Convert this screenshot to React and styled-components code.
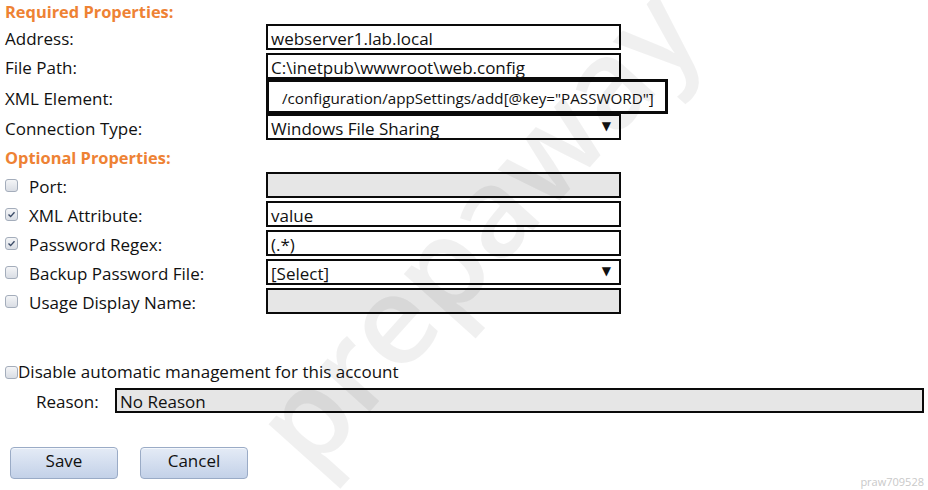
import React from "react";
import styled, { createGlobalStyle } from "styled-components";

const Global = createGlobalStyle`
  html, body {
    margin: 0;
    padding: 0;
    background: #fff;
  }
  body {
    font-family: "Open Sans", "Noto Sans", sans-serif;
    font-size: 17px;
    line-height: 20px;
    color: #111;
  }
`;

const Page = styled.div`
  position: relative;
  width: 928px;
  height: 490px;
  overflow: hidden;
  padding: 0 0 0 5px;
  box-sizing: border-box;
`;

const SectionTitle = styled.div`
  color: #ee8234;
  font-weight: 700;
  font-size: 16.4px;
  height: ${(p) => p.h || 24}px;
  line-height: ${(p) => p.lh || 24}px;
`;

const Rows = styled.div`
  display: flex;
  flex-direction: column;
  gap: 3px;
`;

const Row = styled.div`
  display: flex;
  align-items: center;
`;

const Label = styled.label`
  width: 261px;
  flex-shrink: 0;
  display: flex;
  align-items: center;
  gap: 11px;
  padding-top: 4px;
`;

const Field = styled.div`
  box-sizing: border-box;
  width: ${(p) => (p.wide ? 402 : 355)}px;
  height: ${(p) => (p.wide ? 35 : 26)}px;
  margin: ${(p) => (p.wide ? "-3px 0 -3px" : "0")};
  border: ${(p) => (p.wide ? 3 : 2)}px solid #0a0a0a;
  background: ${(p) => (p.disabled ? "#e6e6e6" : "#fff")};
  padding: ${(p) => (p.wide ? "3px 0 0 13px" : "3px 0 0 3px")};
  font-size: ${(p) => (p.wide ? 15.2 : 17)}px;
  display: flex;
  align-items: center;
  justify-content: space-between;
  white-space: nowrap;
  position: relative;
  z-index: ${(p) => (p.wide ? 1 : 0)};
`;

const Arrow = styled.span`
  font-family: "DejaVu Sans", sans-serif;
  font-size: 12px;
  margin-right: 8px;
  margin-top: -5px;
`;

const Box = styled.span`
  box-sizing: border-box;
  width: 13px;
  height: 13px;
  border: 1px solid #a4adbb;
  border-radius: 3px;
  background: linear-gradient(#f4f5f7, #d9dde4);
  display: inline-flex;
  align-items: center;
  justify-content: center;
  flex-shrink: 0;
  margin-top: -3px;
`;

const Check = ({ checked }) => (
  <Box>
    {checked && (
      <svg width="9" height="9" viewBox="0 0 9 9">
        <path d="M1.5 4.6 L3.6 6.6 L7.5 2.2" fill="none" stroke="#3a4a66" strokeWidth="1.4" />
      </svg>
    )}
  </Box>
);

const DisableLine = styled.div`
  display: flex;
  align-items: center;
  margin-top: 47px;
  height: 22px;
  ${Box} {
    margin-top: 0;
  }
`;

const ReasonRow = styled.div`
  display: flex;
  align-items: center;
  margin-top: 5px;
  padding-left: 31px;
`;

const ReasonLabel = styled.span`
  width: 79px;
  padding-top: 3px;
`;

const ReasonField = styled.div`
  box-sizing: border-box;
  width: 809px;
  height: 25px;
  border: 2px solid #0a0a0a;
  background: #e6e6e6;
  padding: 2px 0 0 3px;
`;

const Buttons = styled.div`
  display: flex;
  gap: 22px;
  margin-top: 34px;
  padding-left: 5px;
`;

const Button = styled.button`
  width: 108px;
  height: 32px;
  border: 1px solid #9aabc6;
  border-radius: 4px;
  background: linear-gradient(#e4ebf6, #c3d1e8);
  font-family: "Open Sans", "Noto Sans", sans-serif;
  font-size: 17px;
  color: #111;
  padding: 0 0 5px;
  box-shadow: inset 0 1px 0 #f4f7fc;
`;

const Watermark = styled.div`
  position: absolute;
  left: 178px;
  top: 150px;
  font-family: "Open Sans", sans-serif;
  font-weight: 600;
  font-size: 124px;
  line-height: 150px;
  color: rgba(0, 0, 0, 0.06);
  transform: rotate(-48deg);
  transform-origin: center;
  pointer-events: none;
  white-space: nowrap;
  z-index: 2;
`;

const Stamp = styled.div`
  position: absolute;
  right: 4px;
  bottom: 1px;
  font-size: 11px;
  line-height: 14px;
  color: #c9c9c9;
`;

const required = [
  { label: "Address:", value: "webserver1.lab.local" },
  { label: "File Path:", value: "C:\\inetpub\\wwwroot\\web.config" },
  { label: "XML Element:", value: '/configuration/appSettings/add[@key="PASSWORD"]', wide: true },
  { label: "Connection Type:", value: "Windows File Sharing", select: true },
];

const optional = [
  { label: "Port:", value: "", disabled: true },
  { label: "XML Attribute:", value: "value", checked: true },
  { label: "Password Regex:", value: "(.*)", checked: true },
  { label: "Backup Password File:", value: "[Select]", select: true },
  { label: "Usage Display Name:", value: "", disabled: true },
];

export default function App() {
  return (
    <Page>
      <Global />
      <SectionTitle>Required Properties:</SectionTitle>
      <Rows>
        {required.map((r) => (
          <Row key={r.label}>
            <Label>{r.label}</Label>
            <Field wide={r.wide}>
              <span>{r.value}</span>
              {r.select && <Arrow>▼</Arrow>}
            </Field>
          </Row>
        ))}
      </Rows>
      <SectionTitle h={32} lh={36}>Optional Properties:</SectionTitle>
      <Rows>
        {optional.map((r) => (
          <Row key={r.label}>
            <Label>
              <Check checked={r.checked} />
              {r.label}
            </Label>
            <Field disabled={r.disabled}>
              <span>{r.value}</span>
              {r.select && <Arrow>▼</Arrow>}
            </Field>
          </Row>
        ))}
      </Rows>
      <DisableLine>
        <Check />
        Disable automatic management for this account
      </DisableLine>
      <ReasonRow>
        <ReasonLabel>Reason:</ReasonLabel>
        <ReasonField>No Reason</ReasonField>
      </ReasonRow>
      <Buttons>
        <Button>Save</Button>
        <Button>Cancel</Button>
      </Buttons>
      <Watermark>prepaway</Watermark>
      <Stamp>praw709528</Stamp>
    </Page>
  );
}
